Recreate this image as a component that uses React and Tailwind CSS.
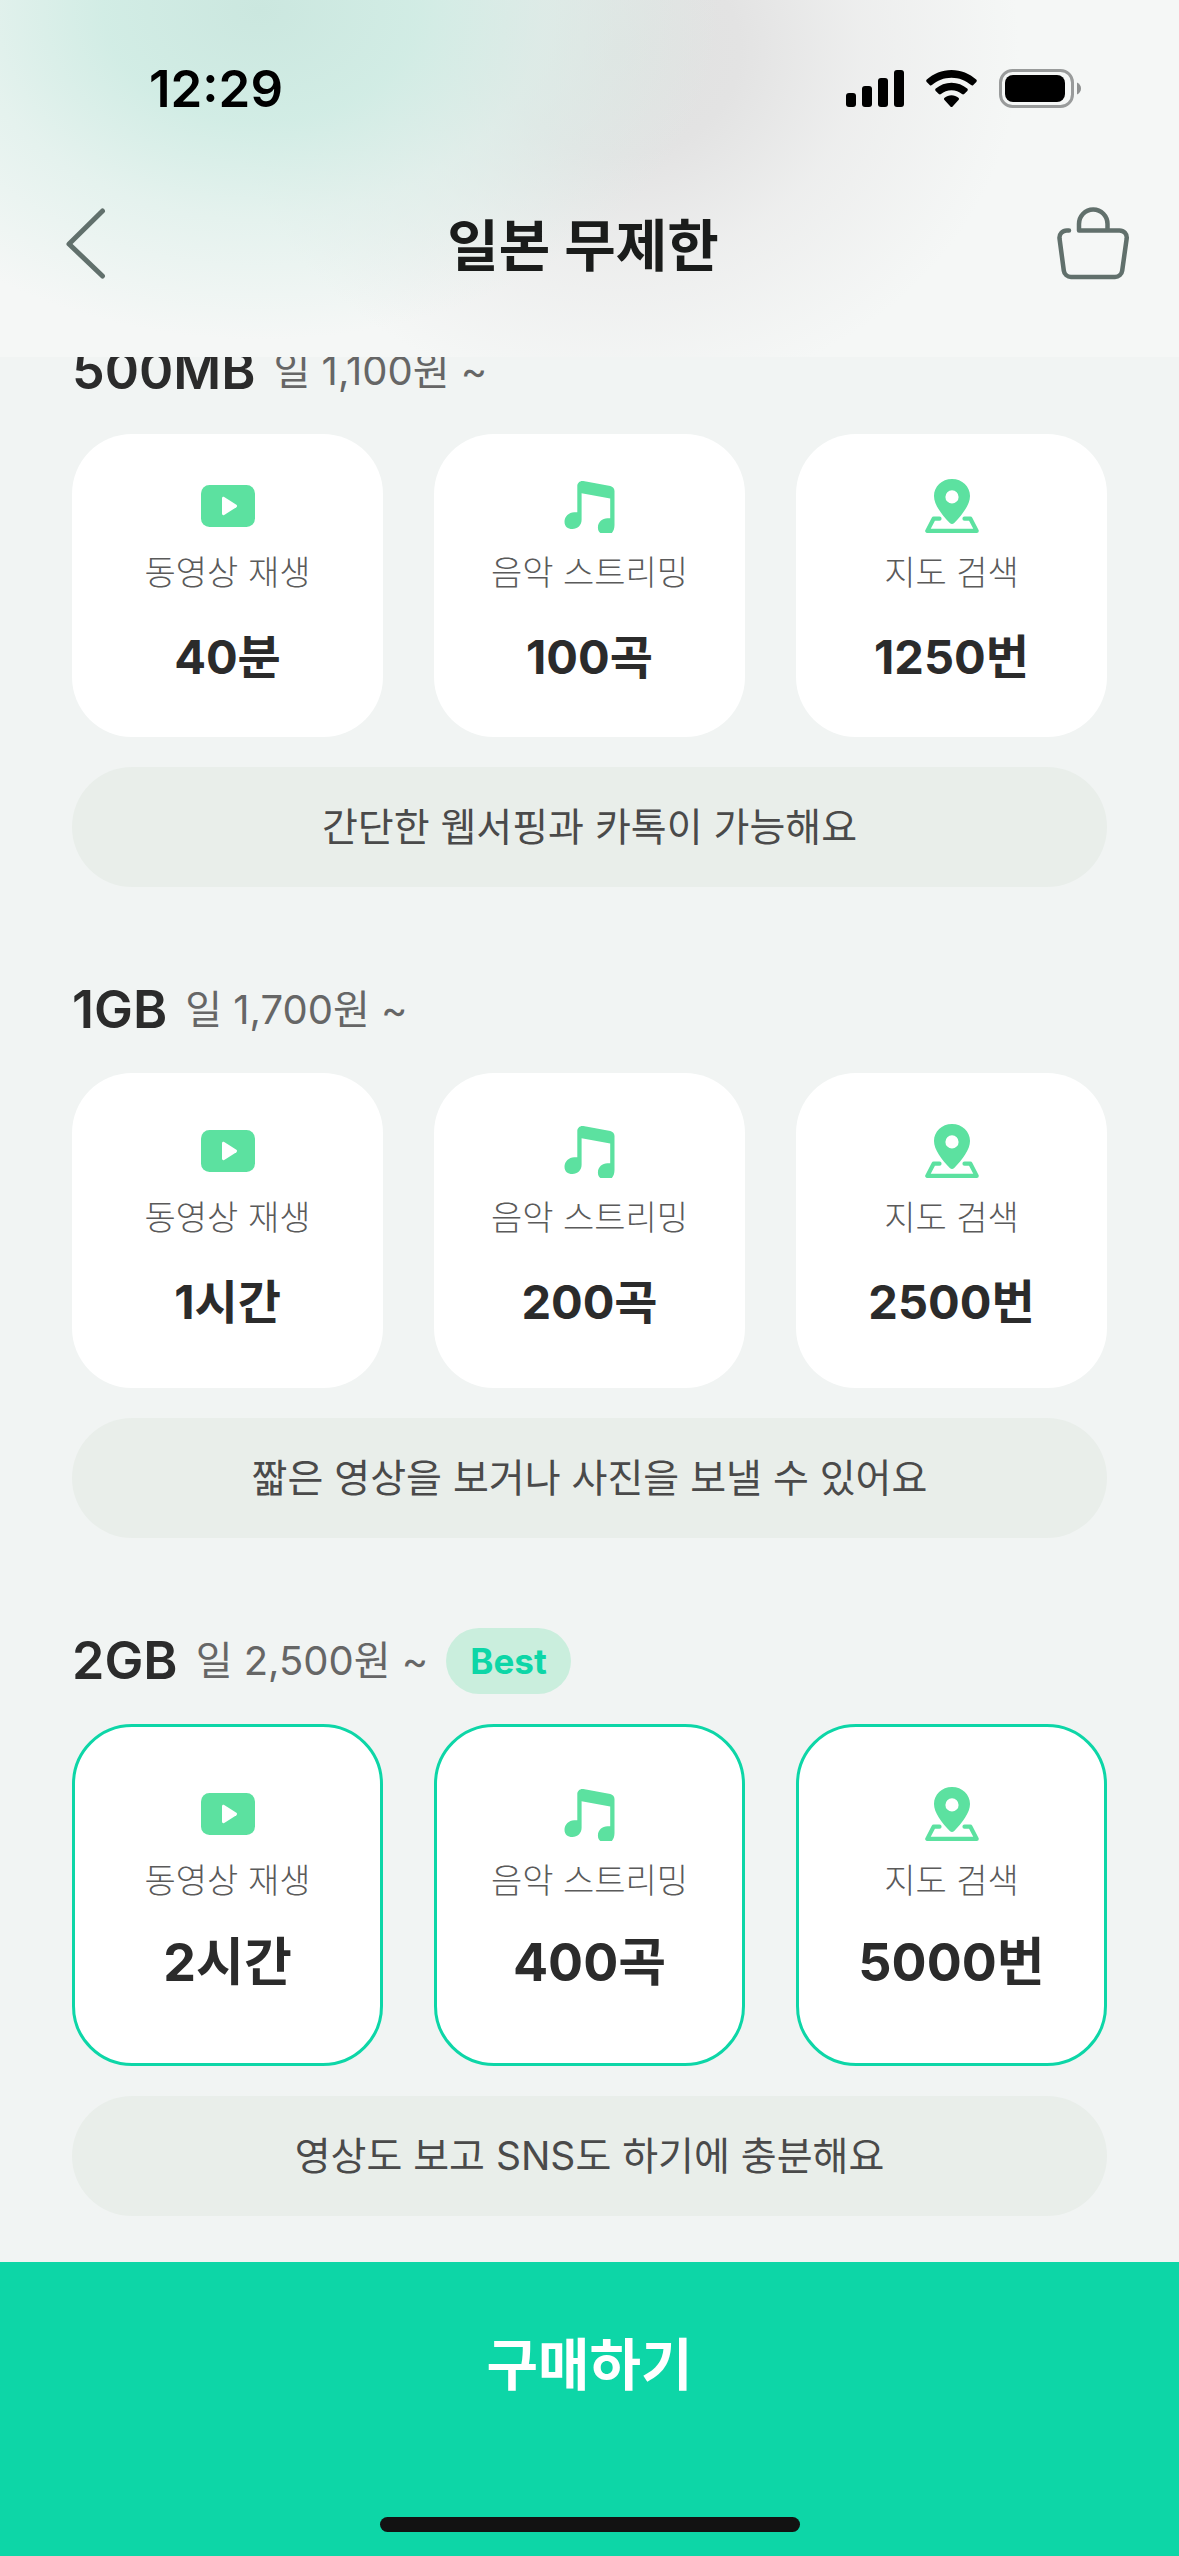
import { useState } from 'react';
import clsx from 'clsx';

const PLANS = [
  {
    size: '500MB',
    price: '일 1,100원 ~',
    video: '40분',
    music: '100곡',
    map: '1250번',
    summary: '간단한 웹서핑과 카톡이 가능해요',
    cardPadding: 'pt-[45px] pb-[38px]',
  },
  {
    size: '1GB',
    price: '일 1,700원 ~',
    video: '1시간',
    music: '200곡',
    map: '2500번',
    summary: '짧은 영상을 보거나 사진을 보낼 수 있어요',
    cardPadding: 'pt-[51px] pb-[44px]',
  },
  {
    size: '2GB',
    price: '일 2,500원 ~',
    video: '2시간',
    music: '400곡',
    map: '5000번',
    summary: '영상도 보고 SNS도 하기에 충분해요',
    cardPadding: 'pt-[60px] pb-[57px]',
    best: true,
  },
];

function SignalIcon() {
  return (
    <svg width="58" height="38" viewBox="0 0 58 38" aria-hidden="true">
      <rect x="0" y="23" width="10" height="14" rx="3" />
      <rect x="16" y="16" width="10" height="21" rx="3" />
      <rect x="32" y="8" width="10" height="29" rx="3" />
      <rect x="48" y="0" width="10" height="37" rx="3" />
    </svg>
  );
}

function WifiIcon() {
  return (
    <svg width="51" height="38" viewBox="0 0 51 38" aria-hidden="true">
      <path d="M25.5 0C35 0 43.6 3.6 50.2 9.6c.8.7.8 1.6.1 2.3l-3 3.1c-.6.7-1.5.7-2.2.1C39.8 10.4 33 7.7 25.5 7.7S11.2 10.4 5.9 15.1c-.7.6-1.6.6-2.2-.1l-3-3.1c-.7-.7-.7-1.6.1-2.3C7.4 3.6 16 0 25.5 0z" />
      <path d="M25.5 12.7c6 0 11.5 2.2 15.7 5.9.8.7.8 1.6.1 2.3l-3.1 3.1c-.6.6-1.5.7-2.2.1-2.8-2.4-6.5-3.8-10.5-3.8s-7.7 1.4-10.5 3.8c-.7.6-1.6.5-2.2-.1l-3.1-3.1c-.7-.7-.7-1.6.1-2.3 4.2-3.7 9.7-5.9 15.7-5.9z" />
      <path d="M25.5 25.3c2.6 0 5 .9 6.9 2.4.8.6.8 1.5.1 2.3l-5.9 6.4c-.6.7-1.6.7-2.2 0L18.5 30c-.7-.8-.7-1.7.1-2.3 1.9-1.5 4.3-2.4 6.9-2.4z" />
    </svg>
  );
}

function BatteryIcon() {
  return (
    <svg width="83" height="40" viewBox="0 0 83 40" aria-hidden="true">
      <rect x="1.5" y="1.5" width="72" height="36" rx="12" fill="none" stroke="#999b9b" strokeWidth="3" />
      <rect x="6" y="6" width="60" height="27" rx="8" />
      <path d="M78 13.5c2.5 1 4 3.4 4 6s-1.500 5-4 6z" fill="#8f9191" />
    </svg>
  );
}

function BackIcon() {
  return (
    <svg width="42" height="72" viewBox="0 0 42 72" fill="none" stroke="#61706c" strokeWidth="5" strokeLinecap="round" strokeLinejoin="round" aria-hidden="true">
      <path d="M38.5 4 5 37l33.5 32" />
    </svg>
  );
}

function BagIcon() {
  return (
    <svg width="73" height="73" viewBox="0 0 73 73" fill="none" stroke="#61706c" strokeWidth="4.5" strokeLinecap="round" strokeLinejoin="round" aria-hidden="true">
      <path d="M12 23.5H9.8c-4.3 0-7.7 3.6-7.3 7.9l4.3 32.2c.5 3.6 3.6 6.4 7.2 6.4h44c3.7 0 6.7-2.8 7.2-6.4l4.5-32.2c.5-4.3-2.8-7.9-7.2-7.9H22V17C22 9 28.2 2.5 36.2 2.5S50.5 9 50.5 17v6" />
    </svg>
  );
}

function VideoIcon() {
  return (
    <svg width="54" height="54" viewBox="0 0 54 54" fill="#5ce1a0" aria-hidden="true">
      <rect y="6" width="54" height="42" rx="8.5" />
      <path d="M21 19.2v15.6c0 1.2 1.2 1.8 2.2 1.2l12.2-7.8c.9-.6.9-1.8 0-2.4L23.2 18c-1-.6-2.2 0-2.2 1.2z" fill="#fff" />
    </svg>
  );
}

function MusicIcon() {
  return (
    <svg width="54" height="54" viewBox="1 0 54 54" fill="#5ce1a0" aria-hidden="true">
      <path d="M15.3 7c0-3.2 2.9-5.5 6-4.9l27 5c2.4.5 4.2 2.6 4.2 5V46c0 3.3-.9 6-2.6 8H38.4c-1.7-1.2-2.5-3-2.5-5.5 0-5.5 4.4-9.3 9.5-9.3h2.8V19.5l-28.6-5.2v26.5c0 5.3-4 9.3-9.3 9.3-4.5 0-7.8-2.6-7.8-7.3 0-5.3 4.5-9.6 9.6-9.6h3.2z" />
    </svg>
  );
}

function MapIcon() {
  return (
    <svg width="54" height="54" viewBox="0 0 54 54" fill="#5ce1a0" aria-hidden="true">
      <path fillRule="evenodd" d="M27 0c10.3 0 18 7.6 18 17 0 8.7-7.6 18.5-15.8 27-1.4 1.4-3 1.4-4.4 0C16.6 35.5 9 25.7 9 17 9 7.6 16.7 0 27 0zm0 11.3a6.6 6.6 0 1 0 0 13.2 6.6 6.6 0 0 0 0-13.2z" />
      <path d="M14.5 39.7H8.6L2.3 51.9h49.4l-6.3-12.2h-5.9" fill="none" stroke="#5ce1a0" strokeWidth="4.2" strokeLinecap="round" strokeLinejoin="round" />
    </svg>
  );
}

function UsageCard({ icon, label, value, plan }) {
  return (
    <div
      className={clsx(
        'flex flex-col items-center rounded-[60px] bg-white text-center',
        plan.cardPadding,
        plan.best && 'border-3 border-[#0dd6a7]'
      )}
    >
      {icon}
      <p className="mt-4 text-[34px] leading-[48px] font-light text-[#5a5a5a]">{label}</p>
      <p
        className={clsx(
          'font-bold text-[#2b2b2b]',
          plan.best ? 'mt-[14px] text-[52px] leading-[87px]' : 'mt-[18px] text-[47px] leading-[84px]'
        )}
      >
        {value}
      </p>
    </div>
  );
}

function PlanSection({ plan }) {
  return (
    <section>
      <div className="flex h-[66px] items-center">
        <h2 className="text-[52px] leading-[66px] font-semibold text-[#2b2b2b]">{plan.size}</h2>
        <span className="ml-[18px] text-[40px] leading-[66px] text-[#666]">{plan.price}</span>
        {plan.best && (
          <span className="ml-[18px] rounded-full bg-[#caeedd] px-6 text-[35px] leading-[66px] font-bold text-[#0dd6a7]">
            Best
          </span>
        )}
      </div>
      <div className="mt-[30px] grid grid-cols-3 gap-[51px]">
        <UsageCard icon={<VideoIcon />} label="동영상 재생" value={plan.video} plan={plan} />
        <UsageCard icon={<MusicIcon />} label="음악 스트리밍" value={plan.music} plan={plan} />
        <UsageCard icon={<MapIcon />} label="지도 검색" value={plan.map} plan={plan} />
      </div>
      <p className="mt-[30px] rounded-[60px] bg-[#e9eeea] text-center text-[39px] leading-[120px] text-[#4a4a4a]">
        {plan.summary}
      </p>
    </section>
  );
}

export default function App() {
  const [purchased, setPurchased] = useState(false);

  return (
    <div className="flex min-h-screen flex-col bg-[#f1f4f3] font-[Inter,'Noto_Sans_CJK_KR',sans-serif]">
      <header className="relative z-10 overflow-hidden bg-[#f5f7f6] bg-[radial-gradient(ellipse_460px_330px_at_260px_10px,#cbe7df_0%,#d0ece4f2_34%,#dbefe9a6_62%,#eaf3f000_100%),radial-gradient(ellipse_400px_350px_at_620px_50px,#e0e1e0_0%,#e3e3e3_30%,#e9e9e9a6_60%,#f2f2f200_100%)]">
        {/* Status bar */}
        <div className="flex h-[177px] items-center justify-between pr-[97px] pl-[149px]">
          <span className="text-[51px] leading-[60px] font-semibold text-black">12:29</span>
          <div className="flex items-center gap-[22px]">
            <SignalIcon />
            <WifiIcon />
            <BatteryIcon />
          </div>
        </div>
        <div className="flex h-[180px] items-start justify-between pr-[49px] pl-16">
          <button type="button" aria-label="뒤로" className="mt-[30px] w-[45px]">
            <BackIcon />
          </button>
          <h1 className="mt-[27px] text-[56px] leading-[84px] font-semibold text-[#1a1c1b]">일본 무제한</h1>
          <button type="button" aria-label="장바구니" className="mt-[30px]">
            <BagIcon />
          </button>
        </div>
      </header>

      {/* List is scrolled slightly under the header */}
      <main className="-mt-[19px] flex flex-col gap-[90px] px-[72px] pb-[46px]">
        {PLANS.map((plan) => (
          <PlanSection key={plan.size} plan={plan} />
        ))}
      </main>

      <footer className="mt-auto flex flex-col items-center bg-[#0dd6a7] pb-6">
        <button
          type="button"
          aria-pressed={purchased}
          onClick={() => setPurchased(true)}
          className="w-full pt-[61px] pb-[110px] text-[56px] leading-[84px] font-semibold text-white"
        >
          구매하기
        </button>
        <div className="h-[15px] w-[420px] rounded-full bg-[#121212]"></div>
      </footer>
    </div>
  );
}
